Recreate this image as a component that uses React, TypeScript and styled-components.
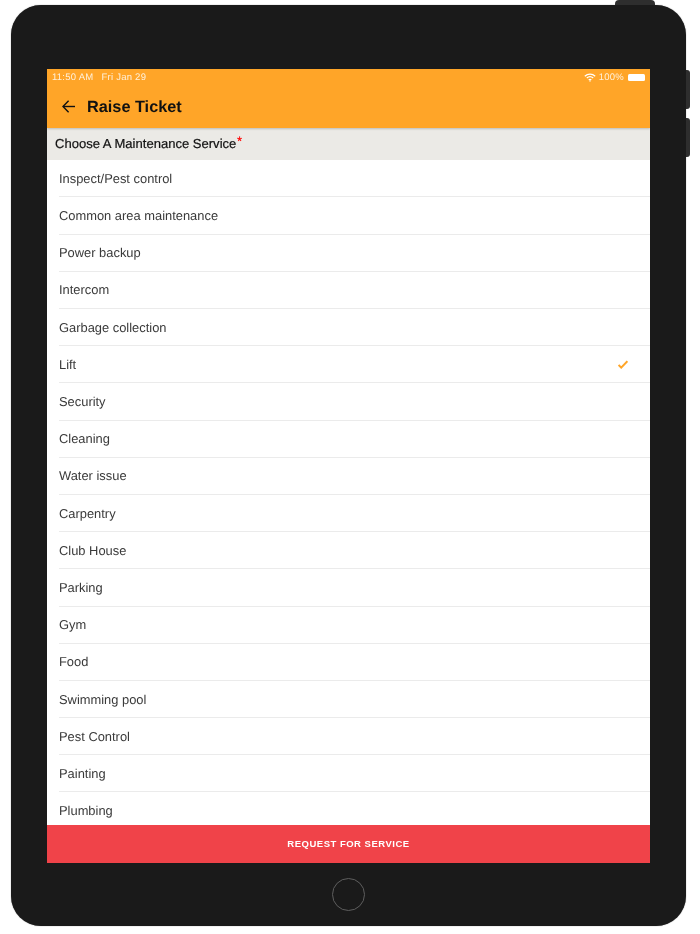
import styled, { createGlobalStyle } from "styled-components";

const services = [
  "Inspect/Pest control",
  "Common area maintenance",
  "Power backup",
  "Intercom",
  "Garbage collection",
  "Lift",
  "Security",
  "Cleaning",
  "Water issue",
  "Carpentry",
  "Club House",
  "Parking",
  "Gym",
  "Food",
  "Swimming pool",
  "Pest Control",
  "Painting",
  "Plumbing",
];

const selected = "Lift";

const App = () => {
  return (
    <>
      <GlobalStyle />
      <Page>
        <Device>
          <TopButton />
          <SideButton $top={65} />
          <SideButton $top={113} />
          <Screen>
            <Header>
              <StatusBar>
                <span>11:50 AM</span>
                <StatusDate>Fri Jan 29</StatusDate>
                <StatusRight>
                  <svg width="12" height="9" viewBox="0 0 12 9" fill="none" stroke="#fff">
                    <path d="M0.8 3.2C3.8 0.4 8.2 0.4 11.2 3.2" strokeWidth="1.3" />
                    <path d="M2.8 5.1C4.6 3.5 7.4 3.5 9.2 5.1" strokeWidth="1.3" />
                    <path d="M4.7 6.9C5.5 6.3 6.5 6.3 7.3 6.9" strokeWidth="1.3" />
                    <circle cx="6" cy="8" r="0.7" fill="#fff" stroke="none" />
                  </svg>
                  <span>100%</span>
                  <Battery />
                </StatusRight>
              </StatusBar>
              <TitleRow>
                <BackIcon width="13" height="13" viewBox="0 0 13 13" fill="none" stroke="#111" strokeWidth="1.4">
                  <path d="M13 6.5H1.2" />
                  <path d="M6.6 0.8L1 6.5L6.6 12.2" />
                </BackIcon>
                <Title>Raise Ticket</Title>
              </TitleRow>
            </Header>
            <SectionTitle>
              Choose A Maintenance Service<Required>*</Required>
            </SectionTitle>
            <ServiceList>
              {services.map((service) => (
                <ServiceRow key={service}>
                  {service}
                  {service === selected && (
                    <svg width="10" height="9" viewBox="0 0 10 9" fill="none" stroke="#ffa528" strokeWidth="2">
                      <path d="M0.6 5L3.2 7.6L9.4 1.2" />
                    </svg>
                  )}
                </ServiceRow>
              ))}
            </ServiceList>
            <RequestButton>REQUEST FOR SERVICE</RequestButton>
          </Screen>
          <HomeArea>
            <HomeButton />
          </HomeArea>
        </Device>
      </Page>
    </>
  );
};

export default App;

const GlobalStyle = createGlobalStyle`
  html,
  body {
    margin: 0;
    background: #fff;
    font-family: "Liberation Sans", Arial, sans-serif;
    text-rendering: geometricPrecision;
  }
`;

const Page = styled.div`
  box-sizing: border-box;
  width: 700px;
  height: 934px;
  padding: 5px 14px 8px 11px;
  overflow: hidden;
`;

const Device = styled.div`
  position: relative;
  box-sizing: border-box;
  height: 921px;
  padding: 64px 36px 0;
  background: #1a1a1a;
  border-radius: 30px;
  box-shadow: 0 0 1px rgba(0, 0, 0, 0.6);
  display: flex;
  flex-direction: column;
  filter: blur(0.3px);
`;

const TopButton = styled.div`
  position: absolute;
  top: -5px;
  right: 31px;
  width: 40px;
  height: 5px;
  background: #2e2e2e;
  border-radius: 4px 4px 0 0;
`;

const SideButton = styled.div<{ $top: number }>`
  position: absolute;
  top: ${(props) => props.$top}px;
  right: -4px;
  width: 4px;
  height: 39px;
  background: #2e2e2e;
  border-radius: 0 3px 3px 0;
`;

const Screen = styled.div`
  height: 794px;
  flex-shrink: 0;
  background: #fff;
  display: flex;
  flex-direction: column;
  overflow: hidden;
`;

const Header = styled.header`
  height: 59px;
  flex-shrink: 0;
  background: #ffa528;
  box-shadow: 0 1px 2px rgba(0, 0, 0, 0.2);
  position: relative;
  display: flex;
  flex-direction: column;
`;

const StatusBar = styled.div`
  height: 15px;
  padding: 2px 5px 0;
  display: flex;
  align-items: center;
  font-size: 9.5px;
  letter-spacing: 0.25px;
  color: #fff1dc;
`;

const StatusDate = styled.span`
  margin-left: 8px;
`;

const StatusRight = styled.div`
  margin-left: auto;
  display: flex;
  align-items: center;
  gap: 3px;
`;

const Battery = styled.div`
  width: 17px;
  height: 7px;
  margin-left: 1px;
  background: #fff;
  border-radius: 1.5px;
`;

const TitleRow = styled.div`
  height: 44px;
  padding: 3px 15px 0;
  display: flex;
  align-items: center;
  gap: 12px;
`;

const BackIcon = styled.svg`
  margin-bottom: 2px;
`;

const Title = styled.h1`
  margin: 0;
  font-size: 16.3px;
  font-weight: 700;
  color: #111;
`;

const SectionTitle = styled.h2`
  height: 32px;
  flex-shrink: 0;
  margin: 0;
  padding: 0 8px 2px;
  box-sizing: border-box;
  background: #ebeae6;
  display: flex;
  align-items: center;
  font-size: 13.05px;
  font-weight: 400;
  color: #111;
  -webkit-text-stroke: 0.2px #111;
`;

const Required = styled.span`
  align-self: flex-start;
  margin-top: 7px;
  margin-left: 1px;
  font-size: 12px;
  line-height: 12px;
  color: #f00;
  -webkit-text-stroke: 0.3px #f00;
`;

const ServiceList = styled.ul`
  flex: 1;
  min-height: 0;
  margin: 0;
  padding: 0.3px 0 0;
  list-style: none;
  overflow: hidden;
`;

const ServiceRow = styled.li`
  box-sizing: border-box;
  height: 37.19px;
  margin-left: 12px;
  padding-right: 22px;
  border-bottom: 1px solid #ebebeb;
  display: flex;
  align-items: center;
  justify-content: space-between;
  font-size: 12.9px;
  color: #3a3a3a;
`;

const RequestButton = styled.button`
  height: 38px;
  flex-shrink: 0;
  border: 0;
  padding: 0 0 1px;
  background: #f04349;
  color: #fff;
  font-family: inherit;
  font-size: 9.5px;
  font-weight: 700;
  letter-spacing: 0.5px;
`;

const HomeArea = styled.div`
  flex: 1;
  display: flex;
  align-items: center;
  justify-content: center;
`;

const HomeButton = styled.div`
  box-sizing: border-box;
  width: 33px;
  height: 33px;
  border: 1.5px solid #5e5e5e;
  border-radius: 50%;
`;
